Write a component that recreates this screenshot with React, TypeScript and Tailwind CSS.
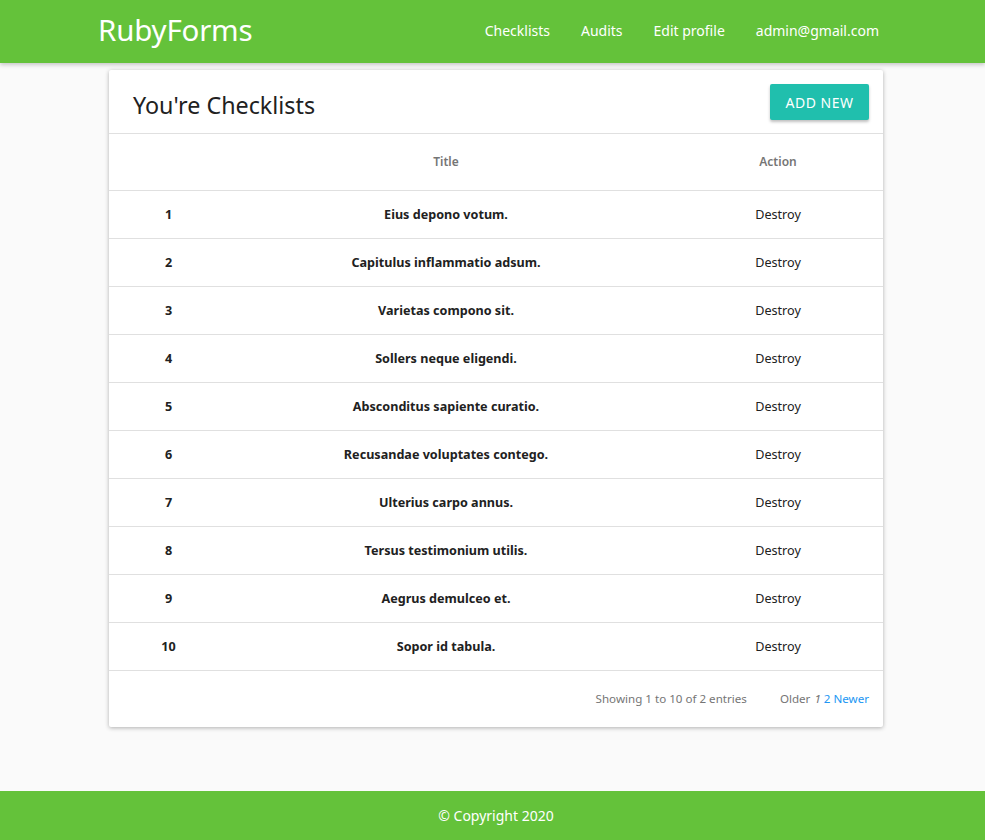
import React from "react";

const ROWS = [
    "Eius depono votum.",
    "Capitulus inflammatio adsum.",
    "Varietas compono sit.",
    "Sollers neque eligendi.",
    "Absconditus sapiente curatio.",
    "Recusandae voluptates contego.",
    "Ulterius carpo annus.",
    "Tersus testimonium utilis.",
    "Aegrus demulceo et.",
    "Sopor id tabula.",
];

const NAV = ["Checklists", "Audits", "Edit profile", "admin@gmail.com"];

export default function App() {
    return (
        <div
            className="min-h-[840px] flex flex-col bg-[#fafafa] text-[#212121]"
            style={{ fontFamily: '"Noto Sans", "Open Sans", sans-serif' }}
        >
            <header className="h-[63px] bg-[#64c23a] shadow-[0_2px_4px_rgba(0,0,0,0.2)] relative z-10">
                <div className="flex items-center justify-between h-full pl-[98px] pr-[106px]">
                    <a className="text-white text-[29.5px] leading-none tracking-[-0.2px] -mt-[4px]">RubyForms</a>
                    <nav className="flex items-center gap-[31px] text-white text-[14px] -mt-[2px]">
                        {NAV.map((n) => (
                            <a key={n}>{n}</a>
                        ))}
                    </nav>
                </div>
            </header>

            <main className="flex-1 pt-[7px] pb-[64px]">
                <div className="ml-[109px] w-[774px] bg-white rounded-[2px] shadow-[0_1px_4px_rgba(0,0,0,0.3)]">
                    <div className="h-[64px] flex items-center justify-between pl-[24px] pr-[14px] border-b border-[#e0e0e0]">
                        <h1 className="text-[23.3px] text-[#212121] mt-[7px]">You're Checklists</h1>
                        <button className="h-[36px] w-[99px] bg-[#20bfad] text-white text-[14px] tracking-[0.5px] rounded-[2px] shadow-[0_2px_3px_rgba(0,0,0,0.25)] mt-[1px]">
                            ADD NEW
                        </button>
                    </div>

                    <div className="grid grid-cols-[118px_438px_1fr] h-[57px] items-center border-b border-[#e0e0e0] text-[12px] font-semibold text-[#757575]">
                        <div />
                        <div className="text-center">Title</div>
                        <div className="text-center pl-[8px]">Action</div>
                    </div>

                    {ROWS.map((title, i) => (
                        <div
                            key={i}
                            className="grid grid-cols-[118px_438px_1fr] h-[48px] items-center pt-[2px] border-b border-[#e0e0e0] text-[12.6px]"
                        >
                            <div className="text-center font-bold pl-[1px]">{i + 1}</div>
                            <div className="text-center font-bold">{title}</div>
                            <div className="text-center pl-[8px]">Destroy</div>
                        </div>
                    ))}

                    <div className="h-[56px] flex items-center justify-end pr-[14px] text-[11.6px] text-[#757575]">
                        <span>Showing 1 to 10 of 2 entries</span>
                        <span className="ml-[33px]">Older</span>
                        <span className="ml-[4px] italic">1</span>
                        <span className="ml-[3px] text-[#2196f3]">2 Newer</span>
                    </div>
                </div>
            </main>

            <footer className="h-[49px] bg-[#64c23a] flex items-center justify-center pl-[7px] text-white text-[14px]">
                © Copyright 2020
            </footer>
        </div>
    );
}
